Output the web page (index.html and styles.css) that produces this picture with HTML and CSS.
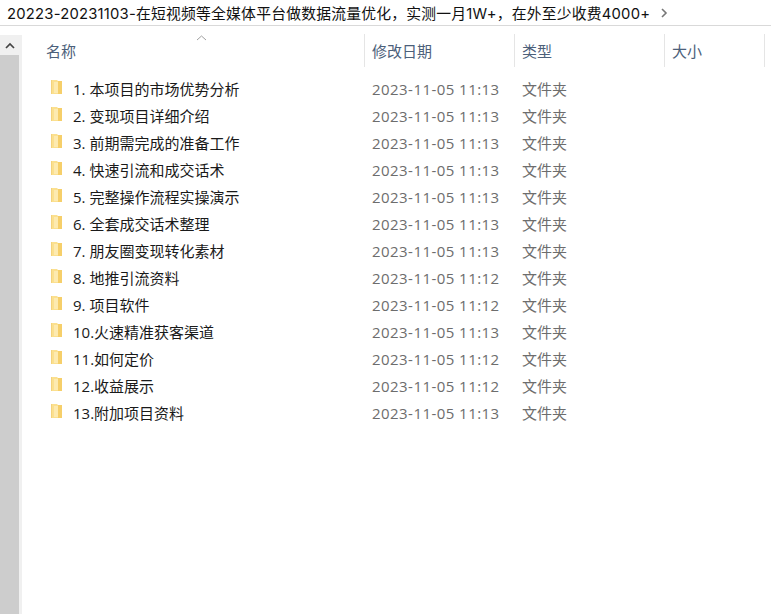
FILE: index.html
```html
<!DOCTYPE html>
<html lang="zh-CN">
<head>
  <meta charset="UTF-8" />
  <title>文件夹</title>
  <link rel="stylesheet" href="styles.css">
</head>
<body>
  <svg class="defs" width="0" height="0">
    <symbol id="folder" viewBox="0 0 13 16">
      <path d="M1 1h6l1 1v13H1z" fill="#fbe08f"/>
      <path d="M8 2h4v13H8z" fill="#f6cf6a"/>
      <path d="M4 3h4v11H4z" fill="#fdeab0"/>
      <path d="M1 1h1v14H1z" fill="#f4d27c"/>
    </symbol>
  </svg>

  <div class="crumb">
    <span class="crumb-text">20223-20231103-在短视频等全媒体平台做数据流量优化，实测一月1W+，在外至少收费4000+</span>
    <svg class="crumb-arrow" width="8" height="10" viewBox="0 0 8 10"><path d="M2 1l4 4-4 4" fill="none" stroke="#777" stroke-width="1.6"/></svg>
  </div>

  <div class="explorer">
    <div class="scrollbar">
      <div class="scroll-up">
        <svg width="10" height="7" viewBox="0 0 10 7"><path d="M1 6l4-4 4 4" fill="none" stroke="#444" stroke-width="1.7"/></svg>
      </div>
      <div class="scroll-thumb"></div>
    </div>

    <div class="list">
      <div class="head">
        <div class="col col-name">名称
          <svg class="sort" width="11" height="6" viewBox="0 0 11 6"><path d="M1 5l4.500-4 4.500 4" fill="none" stroke="#a0a0a0"/></svg>
        </div>
        <div class="col">修改日期</div>
        <div class="col">类型</div>
        <div class="col">大小</div>
      </div>

      <div class="row"><span class="name"><svg class="icon"><use href="#folder"/></svg>1. 本项目的市场优势分析</span><span class="date">2023-11-05 11:13</span><span class="type">文件夹</span></div>
      <div class="row"><span class="name"><svg class="icon"><use href="#folder"/></svg>2. 变现项目详细介绍</span><span class="date">2023-11-05 11:13</span><span class="type">文件夹</span></div>
      <div class="row"><span class="name"><svg class="icon"><use href="#folder"/></svg>3. 前期需完成的准备工作</span><span class="date">2023-11-05 11:13</span><span class="type">文件夹</span></div>
      <div class="row"><span class="name"><svg class="icon"><use href="#folder"/></svg>4. 快速引流和成交话术</span><span class="date">2023-11-05 11:13</span><span class="type">文件夹</span></div>
      <div class="row"><span class="name"><svg class="icon"><use href="#folder"/></svg>5. 完整操作流程实操演示</span><span class="date">2023-11-05 11:13</span><span class="type">文件夹</span></div>
      <div class="row"><span class="name"><svg class="icon"><use href="#folder"/></svg>6. 全套成交话术整理</span><span class="date">2023-11-05 11:13</span><span class="type">文件夹</span></div>
      <div class="row"><span class="name"><svg class="icon"><use href="#folder"/></svg>7. 朋友圈变现转化素材</span><span class="date">2023-11-05 11:13</span><span class="type">文件夹</span></div>
      <div class="row"><span class="name"><svg class="icon"><use href="#folder"/></svg>8. 地推引流资料</span><span class="date">2023-11-05 11:12</span><span class="type">文件夹</span></div>
      <div class="row"><span class="name"><svg class="icon"><use href="#folder"/></svg>9. 项目软件</span><span class="date">2023-11-05 11:12</span><span class="type">文件夹</span></div>
      <div class="row"><span class="name"><svg class="icon"><use href="#folder"/></svg>10.火速精准获客渠道</span><span class="date">2023-11-05 11:13</span><span class="type">文件夹</span></div>
      <div class="row"><span class="name"><svg class="icon"><use href="#folder"/></svg>11.如何定价</span><span class="date">2023-11-05 11:12</span><span class="type">文件夹</span></div>
      <div class="row"><span class="name"><svg class="icon"><use href="#folder"/></svg>12.收益展示</span><span class="date">2023-11-05 11:12</span><span class="type">文件夹</span></div>
      <div class="row"><span class="name"><svg class="icon"><use href="#folder"/></svg>13.附加项目资料</span><span class="date">2023-11-05 11:13</span><span class="type">文件夹</span></div>
    </div>
  </div>
</body>
</html>
```

FILE: styles.css
```css
html, body {
  height: 100%;
}
body {
  margin: 0;
  background: #fff;
  font-family: "Open Sans", "Noto Sans CJK SC", sans-serif;
  font-size: 15px;
  color: #1a1a1a;
  overflow: hidden;
  display: flex;
  flex-direction: column;
}
.defs {
  display: none;
}
.crumb {
  height: 25px;
  flex: none;
  display: flex;
  align-items: center;
  gap: 10px;
  padding-left: 7px;
  border-bottom: 1px solid #d9d9d9;
  white-space: nowrap;
}
.crumb-text {
  font-family: Inter, "Noto Sans CJK SC", sans-serif;
  font-size: 14.800px;
  letter-spacing: 0.220px;
  color: #111;
}
.explorer {
  flex: 1;
  display: flex;
  min-height: 0;
}
.scrollbar {
  width: 19px;
  margin-top: 9px;
  display: flex;
  flex-direction: column;
  border-right: 3px solid #f0f0f0;
}
.scroll-up {
  height: 20px;
  background: #f0f0f0;
  display: flex;
  align-items: center;
  justify-content: center;
}
.scroll-thumb {
  flex: 1;
  background: #cdcdcd;
}
.list {
  flex: 1;
  padding-top: 8px;
}
.head {
  display: grid;
  grid-template-columns: 343px 150px 150px 100px;
  height: 33px;
  color: #4c607a;
  font-size: 15px;
}
.col {
  position: relative;
  display: flex;
  align-items: center;
  padding-left: 7px;
  border-right: 1px solid #e5e5e5;
}
.col-name {
  padding-left: 24px;
}
.sort {
  position: absolute;
  left: 174px;
  top: 1px;
}
.head + .row {
  margin-top: 8px;
}
.row {
  display: grid;
  grid-template-columns: 343px 150px 150px;
  height: 27px;
  align-items: center;
}
.name {
  display: flex;
  align-items: center;
  padding-left: 28px;
  color: #1a1a1a;
  font-size: 15px;
}
.icon {
  width: 13px;
  height: 16px;
  margin-right: 10px;
  margin-top: -4px;
}
.date, .type {
  padding-left: 7px;
  color: #6d6d6d;
  font-size: 15px;
}
.date {
  letter-spacing: 0.450px;
}
```
